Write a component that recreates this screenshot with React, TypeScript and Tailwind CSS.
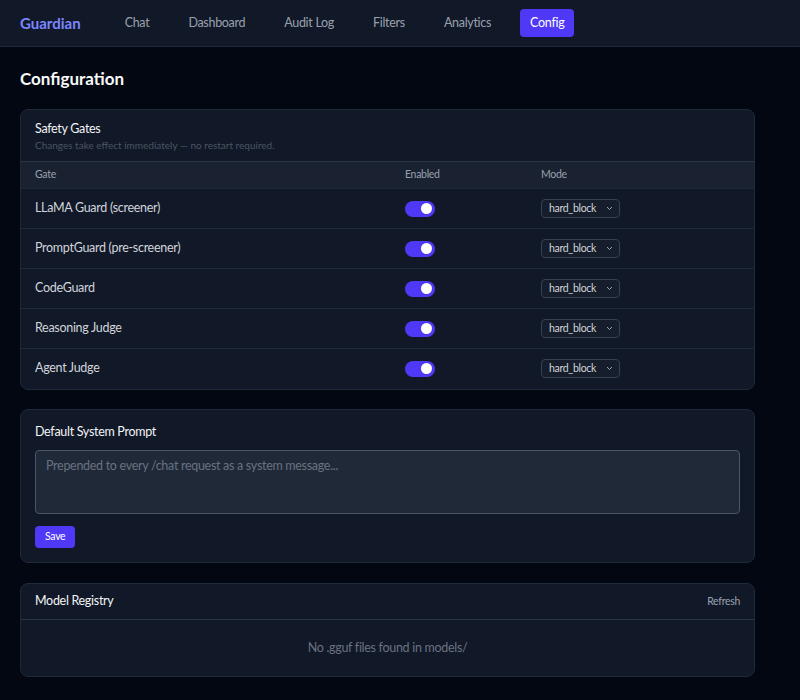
import React, { useState } from 'react';

const navItems = ['Chat', 'Dashboard', 'Audit Log', 'Filters', 'Analytics', 'Config'];

const gates = [
  'LLaMA Guard (screener)',
  'PromptGuard (pre-screener)',
  'CodeGuard',
  'Reasoning Judge',
  'Agent Judge',
];

const Toggle: React.FC<{ on: boolean; onChange: () => void }> = ({ on, onChange }) => (
  <button
    onClick={onChange}
    className={`flex h-4 w-[30px] items-center rounded-full px-[3px] ${
      on ? 'justify-end bg-indigo-600' : 'justify-start bg-gray-600'
    }`}
  >
    <span className="h-[11px] w-[11px] rounded-full bg-white" />
  </button>
);

const ModeSelect: React.FC = () => (
  <div className="flex h-[19px] w-[79px] items-center justify-between rounded border border-gray-700 bg-[#161d2b] pl-[7px] pr-[6px] text-[10.5px] text-gray-300">
    <span>hard_block</span>
    <svg width="7" height="5" viewBox="0 0 7 5" fill="none">
      <path d="M1 1l2.5 2.5L6 1" stroke="#9ca3af" strokeWidth="1" />
    </svg>
  </div>
);

const App: React.FC = () => {
  const [enabled, setEnabled] = useState<boolean[]>(gates.map(() => true));

  return (
    <div className="min-h-[700px] bg-[#030712] font-['Lato',sans-serif] text-gray-200">
      <nav className="flex h-[47px] items-center border-b border-gray-800 bg-[#111827] px-5">
        <span className="mr-[34px] text-[15px] font-bold text-indigo-400">Guardian</span>
        <div className="flex items-center gap-[19px]">
          {navItems.map((item) => (
            <span
              key={item}
              className={`rounded px-[10px] py-[5px] text-[12.5px] tracking-[-0.3px] ${
                item === 'Config' ? 'bg-indigo-600 text-white' : 'text-gray-400'
              }`}
            >
              {item}
            </span>
          ))}
        </div>
      </nav>

      <main className="px-5 pt-[19px] pb-6 tracking-[-0.3px]">
        <h1 className="mb-[17px] text-[17px] font-bold tracking-normal text-gray-50">
          Configuration
        </h1>

        <section className="w-[735px] overflow-hidden rounded-lg border border-gray-800 bg-[#111827]">
          <div className="h-[52px] border-b border-gray-700/70 px-[14px] pt-[10px]">
            <div className="text-[12.5px] text-gray-100">Safety Gates</div>
            <div className="text-[10px] tracking-normal text-gray-600">
              Changes take effect immediately — no restart required.
            </div>
          </div>
          <table className="w-full text-left">
            <thead className="bg-[#1a2130]">
              <tr className="h-[27px] text-[10.5px] text-gray-400">
                <th className="pl-[14px] font-normal">Gate</th>
                <th className="w-[136px] font-normal">Enabled</th>
                <th className="w-[213px] font-normal">Mode</th>
              </tr>
            </thead>
            <tbody>
              {gates.map((gate, i) => (
                <tr key={gate} className="h-[40px] border-t border-gray-800">
                  <td className="pl-[14px] text-[12.5px] text-gray-300">{gate}</td>
                  <td>
                    <Toggle
                      on={enabled[i]}
                      onChange={() =>
                        setEnabled(enabled.map((v, j) => (j === i ? !v : v)))
                      }
                    />
                  </td>
                  <td>
                    <ModeSelect />
                  </td>
                </tr>
              ))}
            </tbody>
          </table>
        </section>

        <section className="mt-[19px] w-[735px] rounded-lg border border-gray-800 bg-[#111827] px-[14px] pt-[13px] pb-[14px]">
          <div className="text-[12.5px] text-gray-100">Default System Prompt</div>
          <textarea
            placeholder="Prepended to every /chat request as a system message..."
            className="mt-[9px] block h-[64px] w-full resize-none rounded border border-gray-600 bg-[#1f2937] px-[10px] py-[6px] text-[12.5px] tracking-[-0.3px] text-gray-200 placeholder:text-gray-500 focus:outline-none"
          />
          <button className="mt-[12px] flex h-[22px] items-center rounded bg-indigo-600 px-[10px] text-[10.5px] text-white">
            Save
          </button>
        </section>

        <section className="mt-5 w-[735px] rounded-lg border border-gray-800 bg-[#111827]">
          <div className="flex h-[36px] items-center justify-between border-b border-gray-700/70 px-[14px]">
            <span className="text-[12.5px] text-gray-100">Model Registry</span>
            <button className="text-[10.5px] text-gray-400">Refresh</button>
          </div>
          <div className="flex h-[56px] items-center justify-center text-[12.5px] text-gray-500">
            No .gguf files found in models/
          </div>
        </section>
      </main>
    </div>
  );
};

export default App;
